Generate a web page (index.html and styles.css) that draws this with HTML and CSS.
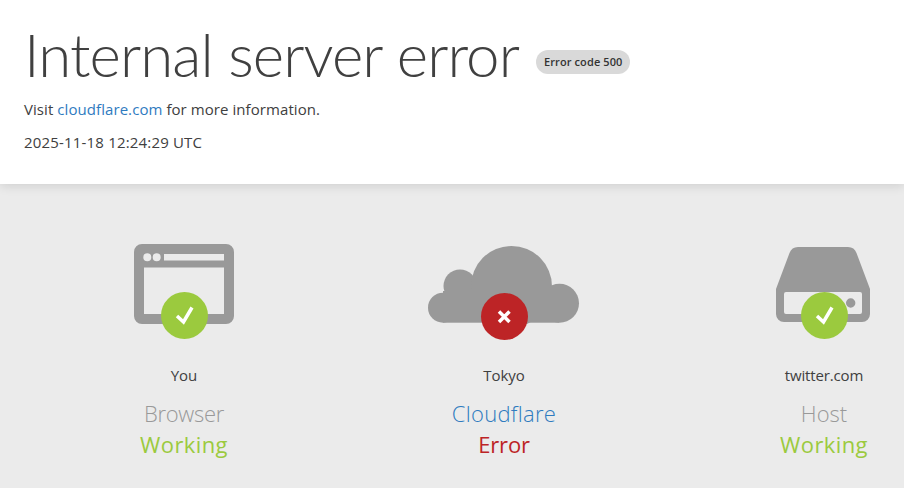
FILE: index.html
```html
<!DOCTYPE html>
<html lang="en">
<head>
<meta charset="utf-8">
<title>Internal server error</title>
<link rel="stylesheet" href="styles.css">
</head>
<body>
<header class="head">
  <h1 class="title"><span class="heading">Internal server error</span><span class="code">Error code 500</span></h1>
  <p class="info">Visit <a href="#">cloudflare.com</a> for more information.</p>
  <p class="time">2025-11-18 12:24:29 UTC</p>
</header>
<main class="diag">
  <section class="col">
    <div class="icon">
      <svg width="100" height="80" viewBox="0 0 100 80"><path fill="#999" fill-rule="evenodd" d="M8 0H92a8 8 0 0 1 8 8V72a8 8 0 0 1-8 8H8a8 8 0 0 1-8-8V8a8 8 0 0 1 8-8ZM10 23.500V70H90V23.500ZM30 10V16.500H90V10ZM13.300 9.300a4 4 0 1 0 0 8a4 4 0 0 0 0-8ZM22.700 9.300a4 4 0 1 0 0 8a4 4 0 0 0 0-8Z"/></svg>
      <span class="badge ok"><svg width="47" height="47" viewBox="0 0 47 47"><path d="M16 24l6.500 6L31 15.500" fill="none" stroke="#fff" stroke-width="3.500"/></svg></span>
    </div>
    <div class="loc">You</div><div class="name tight">Browser</div><div class="state good">Working</div>
  </section>
  <section class="col mid">
    <div class="icon">
      <svg width="152" height="80" viewBox="0 -2 152 80"><g fill="#999"><circle cx="15" cy="61.700" r="15"/><circle cx="32" cy="40" r="16.500"/><circle cx="83.500" cy="40.500" r="40.500"/><circle cx="131.500" cy="57.200" r="19.500"/><rect x="15" y="45" width="116" height="31.700"/></g></svg>
      <span class="badge bad"><svg width="47" height="47" viewBox="0 0 47 47"><path d="M18 18.500l10.500 10.500M28.500 18.500l-10.500 10.500" fill="none" stroke="#fff" stroke-width="3.500"/></svg></span>
    </div>
    <div class="loc">Tokyo</div><div class="name blue">Cloudflare</div><div class="state err">Error</div>
  </section>
  <section class="col">
    <div class="icon">
      <svg width="96" height="80" viewBox="0 -3 96 80"><path fill="#999" fill-rule="evenodd" d="M22 0H72a9 9 0 0 1 8.500 6L94 42V67a8 8 0 0 1-8 8H8a8 8 0 0 1-8-8V42L13.500 6a9 9 0 0 1 8.500-6ZM10 45a2 2 0 0 0-2 2V65a2 2 0 0 0 2 2H84a2 2 0 0 0 2-2V47a2 2 0 0 0-2-2ZM74.700 51.300a4.700 4.700 0 1 0 0 9.400a4.700 4.700 0 0 0 0-9.400Z"/></svg>
      <span class="badge ok"><svg width="47" height="47" viewBox="0 0 47 47"><path d="M16 24l6.500 6L31 15.500" fill="none" stroke="#fff" stroke-width="3.500"/></svg></span>
    </div>
    <div class="loc twit">twitter.com</div><div class="name">Host</div><div class="state good">Working</div>
  </section>
</main>
</body>
</html>
```
FILE: styles.css
```css
* { box-sizing: border-box; }
html, body { margin: 0; height: 100%; }
body { width: 904px; height: 488px; overflow: hidden; background: #ebebeb; font-family: "Open Sans", "Noto Sans", sans-serif; color: #404040; }
.head { height: 184px; background: #fff; padding: 16px 24px 0; box-shadow: 0 2px 10px rgba(0,0,0,.12); position: relative; }
.title { margin: 0; display: flex; align-items: center; gap: 17px; font-family: Lato, "Open Sans", sans-serif; font-weight: 300; font-size: 60px; line-height: 76px; color: #404040; }
.heading { letter-spacing: -.9px; }
.code { background: #d9d9d9; border-radius: 13px; font-family: "Open Sans", sans-serif; font-size: 11px; font-weight: 600; letter-spacing: .1px; line-height: 24px; padding: 0 8px; color: #333; margin-top: 16px; }
.info { margin: 6px 0 0; font-size: 15px; line-height: 22px; letter-spacing: .07px; }
.time { margin: 11px 0 0; font-size: 15px; line-height: 22px; letter-spacing: .18px; }
a { color: #2f7bbf; text-decoration: none; }
.diag { display: grid; grid-template-columns: repeat(3, 160px); column-gap: 160px; padding: 60px 0 0 104px; text-align: center; }
.col { display: flex; flex-direction: column; align-items: center; }
.icon { height: 80px; margin-bottom: 34px; position: relative; display: flex; align-items: flex-start; justify-content: center; }
.badge { position: absolute; left: 50%; top: 48px; width: 47px; height: 47px; margin-left: -23.500px; border-radius: 50%; display: flex; }
.mid .badge { top: 49px; }
.ok { background: #9bca3e; }
.bad { background: #bd2426; }
.loc { font-size: 15px; line-height: 22px; margin-top: 6px; }
.twit { letter-spacing: -.15px; }
.name { font-size: 22px; font-weight: 300; line-height: 30px; margin-top: 12px; color: #999; }
.tight { letter-spacing: -.3px; }
.state { font-size: 22px; line-height: 30px; font-weight: 400; margin-top: 1px; }
.blue { color: #2f7bbf; letter-spacing: .3px; }
.good { color: #9bca3e; letter-spacing: .4px; }
.err { color: #bd2426; letter-spacing: -.2px; }
```
